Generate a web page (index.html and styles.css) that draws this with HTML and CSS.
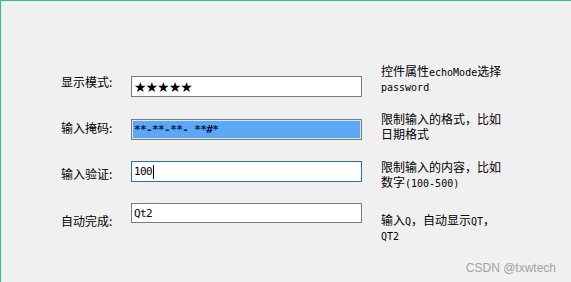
FILE: index.html
```html
<!DOCTYPE html>
<html lang="zh-CN">
<head>
    <meta charset="UTF-8">
    <title>QLineEdit</title>
    <link rel="stylesheet" href="styles.css">
</head>
<body>

<div class="window">
    <div class="form">
        <div class="row row-1">
            <div class="label">显示模式:</div>
            <div class="edit"><span class="stars">★★★★★</span></div>
            <div class="desc">控件属性<span class="latin">echoMode</span>选择<br><span class="latin">password</span></div>
        </div>

        <div class="row row-2">
            <div class="label">输入掩码:</div>
            <div class="edit edit-selected"><span class="mono">**-**-**- **#*</span></div>
            <div class="desc">限制输入的格式，比如<br>日期格式</div>
        </div>

        <div class="row row-3">
            <div class="label">输入验证:</div>
            <div class="edit edit-focus"><span class="mono">100</span><span class="caret"></span></div>
            <div class="desc">限制输入的内容，比如<br>数字<span class="latin">(100-500)</span></div>
        </div>

        <div class="row row-4">
            <div class="label">自动完成:</div>
            <div class="edit"><span class="mono">Qt2</span></div>
            <div class="desc">输入<span class="latin">Q</span>，自动显示<span class="latin">QT</span>，<br><span class="latin">QT2</span></div>
        </div>
    </div>

    <div class="watermark">CSDN @txwtech</div>
</div>

</body>
</html>
```

FILE: styles.css
```css
body {
    margin: 0;
    padding: 0;
    background-color: #f0f0f0;
    font-family: "Noto Sans CJK SC", "DejaVu Sans", sans-serif;
    font-size: 12px;
    color: #000;
}
.window {
    position: relative;
    height: 281px;
    border-top: 1px solid #2fc27e;
    border-left: 1px solid #2fc27e;
    overflow: hidden;
}
.form {
    padding: 63px 0 0 60px;
}
.row {
    display: grid;
    grid-template-columns: 70px 231px 1fr;
    align-items: start;
}
.label {
    line-height: 14px;
}
.desc {
    margin-left: 19px;
    line-height: 15px;
}
.latin, .mono {
    font-family: "DejaVu Sans Mono", "Liberation Mono", monospace;
    font-size: 10px;
    line-height: 1;
}
.edit {
    box-sizing: border-box;
    height: 21px;
    border: 1px solid #7a7a7a;
    background-color: #fff;
    padding: 0 2px;
    display: flex;
    align-items: center;
}
.edit .mono {
    font-size: 11px;
    letter-spacing: -0.6px;
}
.stars {
    font-family: "DejaVu Sans", sans-serif;
    font-size: 14px;
    letter-spacing: -1px;
}
.edit-selected {
    background-color: #5aa8f6;
    box-shadow: inset 0 0 0 1px #d4e6f8;
    color: #0a1a4a;
}
.edit-selected .mono {
    font-weight: bold;
}
.edit-focus {
    border-color: #2a6db0;
}
.caret {
    width: 1px;
    height: 14px;
    background-color: #000;
    margin-left: 1px;
}
.row-1 { height: 47px; }
.row-1 .label { margin-top: 11px; }
.row-1 .edit { margin-top: 12px; }
.row-1 .desc { margin-top: -1px; }

.row-2 { height: 48px; }
.row-2 .label { margin-top: 10px; }
.row-2 .edit { margin-top: 8px; }

.row-3 { height: 44px; }
.row-3 .label { margin-top: 8px; }
.row-3 .edit { margin-top: 2px; }

.row-4 .label { margin-top: 11px; }
.row-4 .desc { margin-top: 9px; }
.row-4 .edit { height: 20px; }

.watermark {
    position: absolute;
    right: 15px;
    bottom: 7px;
    font-family: "Liberation Sans", Arial, sans-serif;
    font-size: 12px;
    color: #a3a3a3;
}
```
